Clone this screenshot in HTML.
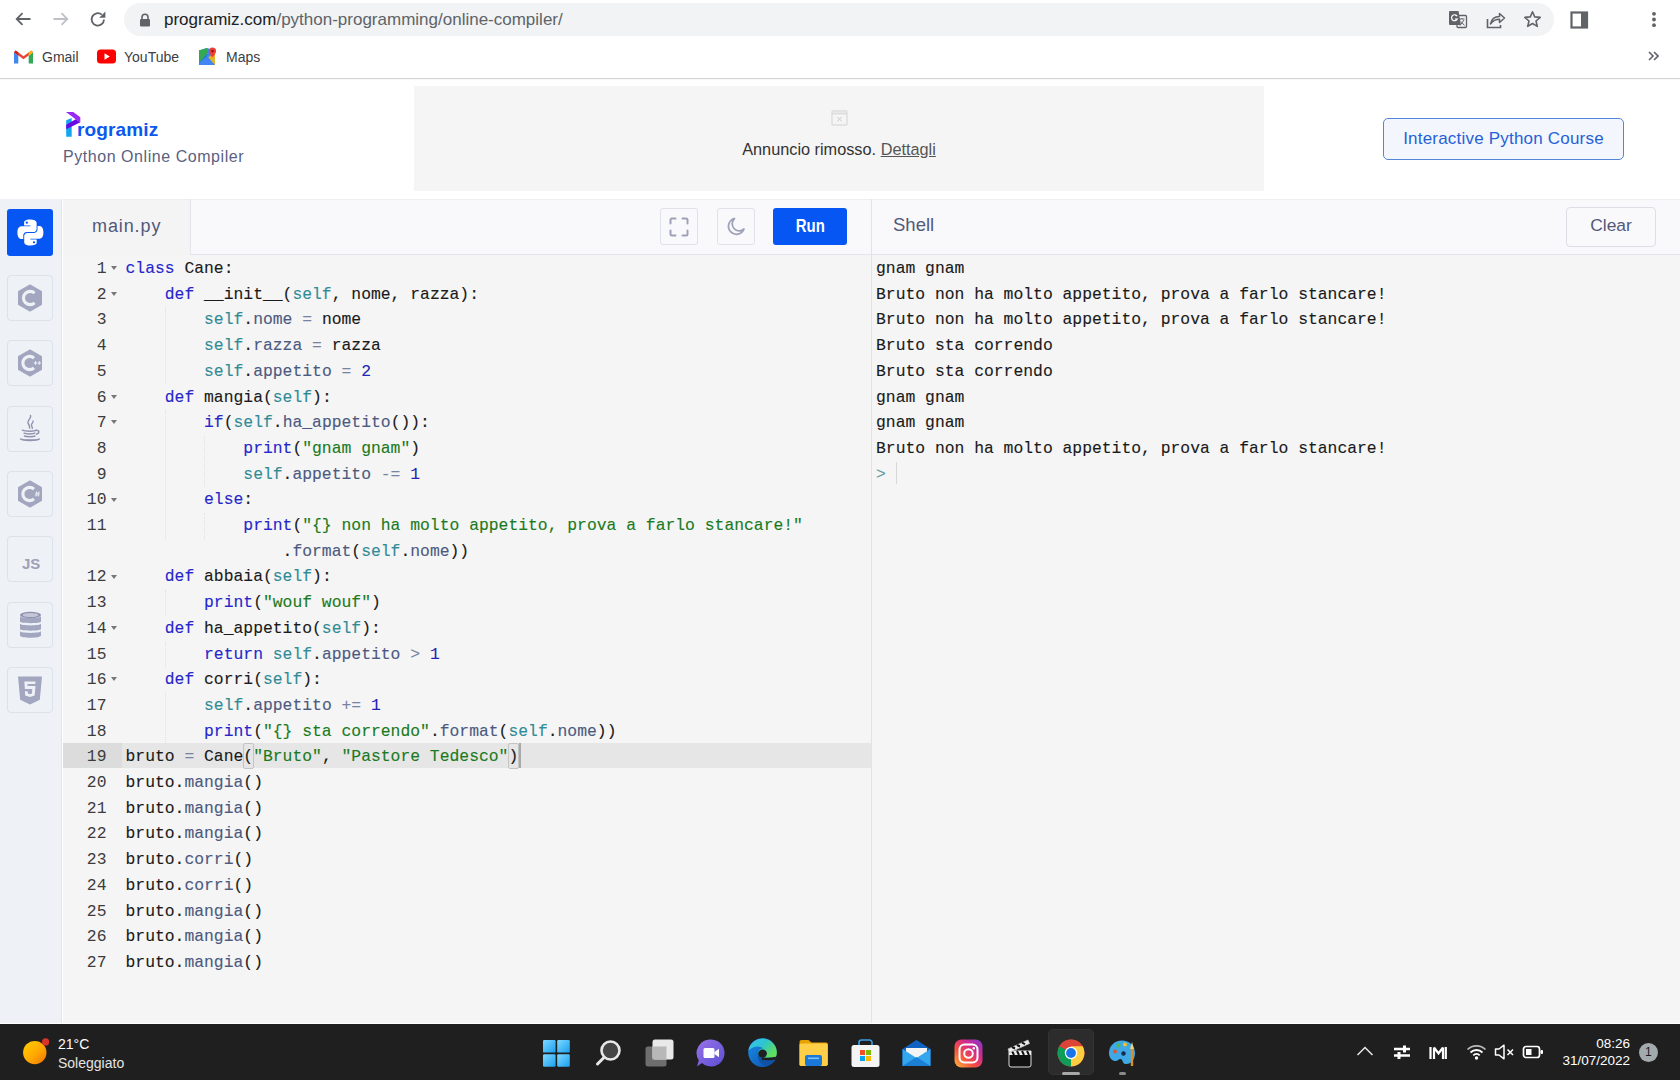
<!DOCTYPE html>
<html><head><meta charset="utf-8">
<style>
*{margin:0;padding:0;box-sizing:border-box}
html,body{width:1680px;height:1080px;overflow:hidden;background:#fff;font-family:"Liberation Sans",sans-serif;position:relative}
.a{position:absolute}
/* chrome */
#omni{left:124px;top:3px;width:1430px;height:33px;border-radius:17px;background:#f1f3f4}
#url{left:164px;top:9px;font-size:17px;line-height:22px;color:#5f6368;white-space:nowrap}
#url b{font-weight:normal;color:#202124}
.bm{top:48px;font-size:14px;line-height:18px;color:#3c4043;white-space:nowrap}
#sep{left:0;top:78px;width:1680px;height:1px;background:#d4d4d4;box-shadow:0 1px 1px rgba(0,0,0,0.04)}
/* header */
#ad{left:414px;top:86px;width:850px;height:105px;background:#f5f5f5}
#adtxt{left:414px;width:850px;top:140px;text-align:center;font-size:16.3px;line-height:19px;color:#333;white-space:nowrap}
#adtxt u{color:#555}
#course{left:1383px;top:118px;width:241px;height:42px;border:1px solid #5485d6;border-radius:5px;background:#f3f6fd;color:#2561d6;font-size:17px;line-height:40px;letter-spacing:0.2px;text-align:center;white-space:nowrap}
#sub{left:63px;top:147px;font-size:16px;line-height:20px;letter-spacing:0.55px;color:#5b5f80;white-space:nowrap}
/* editor */
#side{left:0;top:199px;width:62px;height:824px;background:#eef1f6;border-right:1px solid #e1e4ea}
.lb{left:7px;width:46px;height:46px;border:1px solid #dde1e8;border-radius:4px}
#tabbar{left:63px;top:199px;width:1617px;height:56px;background:#f9f9fb;border-top:1px solid #eceef2;border-bottom:1px solid #e3e5ea}
#tab{left:63px;top:199px;width:128px;height:56px;background:#f4f4f5;border-right:1px solid #e3e5ea;border-top:1px solid #eceef2}
#tabtxt{left:92px;top:215px;font-size:18px;line-height:22px;letter-spacing:0.9px;color:#52587a}
.ib{top:208px;width:38px;height:37px;border:1px solid #dfe2e8;border-radius:3px;background:#f9f9fb}
#run{left:773px;top:208px;width:74px;height:37px;background:#0556f3;border-radius:3px;color:#fff;font-weight:bold;font-size:17.8px;line-height:36px;text-align:center}
#shelltxt{left:893px;top:214px;font-size:18.5px;line-height:22px;color:#52587a}
#clear{left:1566px;top:207px;width:90px;height:40px;border:1px solid #dcdfe6;border-radius:4px;color:#52587a;font-size:17.4px;line-height:34px;text-align:center}
#ed{left:63px;top:255px;width:808px;height:768px;background:#f5f5f5}
#divider{left:871px;top:199px;width:1px;height:824px;background:#e2e3e8}
#sh{left:872px;top:255px;width:808px;height:768px;background:#f5f5f5}
.code{font-family:"Liberation Mono",monospace;font-size:16.37px;line-height:25.7px;white-space:pre;color:#1a1a1a;-webkit-text-stroke:0.12px currentColor}
#gut{left:63px;top:256px;width:43.5px;text-align:right;color:#3c3c3c;-webkit-text-stroke:0}
#src{left:125.5px;top:256px}
#shout{left:876px;top:256px}
.k{color:#2626cc}.s{color:#318b96}.p{color:#4c5a80}.o{color:#7783a3}.n{color:#2424b4}.t{color:#1b7a1d}
.fold{position:absolute;left:111px;width:0;height:0;border-left:3.5px solid transparent;border-right:3.5px solid transparent;border-top:4px solid #777}
#hl{left:63px;top:743px;width:808px;height:25.4px;background:#e6e6e6}
#hlg{left:63px;top:743px;width:59px;height:25.4px;background:#dcdcdc}
.guide{position:absolute;width:1px;border-left:1px dotted #e0e0e0}
/* taskbar */
#tb{left:0;top:1024px;width:1680px;height:56px;background:#1f1f1f}
#wline{left:0;top:1023px;width:1680px;height:1px;background:#fff}
.tt{color:#fff;font-size:13.5px;line-height:16px;white-space:nowrap}
</style></head><body>
<!-- chrome toolbar -->
<div class="a" id="omni"></div>
<svg class="a" style="left:14px;top:10px" width="18" height="18" viewBox="0 0 18 18"><path d="M16.5 9H3M8.5 3.2L2.7 9l5.8 5.8" fill="none" stroke="#5f6368" stroke-width="1.8"/></svg>
<svg class="a" style="left:52px;top:10px" width="18" height="18" viewBox="0 0 18 18"><path d="M1.5 9H15M9.5 3.2L15.3 9l-5.8 5.8" fill="none" stroke="#bdc1c6" stroke-width="1.8"/></svg>
<svg class="a" style="left:89px;top:10px" width="18" height="18" viewBox="0 0 18 18"><path d="M15 9.5A6.2 6.2 0 1 1 12.8 4.6" fill="none" stroke="#5f6368" stroke-width="1.8"/><path d="M16.4 1.6v6.2h-6.2z" fill="#5f6368"/></svg>
<svg class="a" style="left:139px;top:13px" width="12" height="14" viewBox="0 0 12 14"><path d="M3 6V4.2a3 3 0 0 1 6 0V6" fill="none" stroke="#5f6368" stroke-width="1.6"/><rect x="1" y="6" width="10" height="7.5" rx="1.2" fill="#5f6368"/></svg>
<div class="a" id="url"><b>programiz.com</b>/python-programming/online-compiler/</div>
<!-- right icons -->
<svg class="a" style="left:1448px;top:10px" width="20" height="19" viewBox="0 0 20 19"><rect x="9" y="5.5" width="9.5" height="12" rx="1" fill="#f1f3f4" stroke="#5f6368" stroke-width="1.3"/><path d="M2 1h8.5l2.5 14H2a1 1 0 0 1-1-1V2a1 1 0 0 1 1-1z" fill="#5f6368"/><path d="M9.2 6.3A3 3 0 1 0 9.3 9H6.8" fill="none" stroke="#fff" stroke-width="1.2"/><path d="M11.5 9h5M14 8v1M12 15.5l4-5.5M13 11.5l3.5 4" stroke="#5f6368" stroke-width="1" fill="none"/></svg>
<svg class="a" style="left:1486px;top:11px" width="20" height="18" viewBox="0 0 20 18"><path d="M1.5 8v8.5h13V14" fill="none" stroke="#5f6368" stroke-width="1.6"/><path d="M4.5 13c1-5 4.5-7.5 9-7.5V2.5l5 4.5-5 4.5V8.3c-3.8 0-6.6 1.5-9 4.7z" fill="none" stroke="#5f6368" stroke-width="1.5" stroke-linejoin="round"/></svg>
<svg class="a" style="left:1523px;top:10px" width="19" height="18" viewBox="0 0 19 18"><path d="M9.5 1.8l2.2 5.1 5.5.5-4.2 3.6 1.3 5.4-4.8-2.9-4.8 2.9 1.3-5.4-4.2-3.6 5.5-.5z" fill="none" stroke="#5f6368" stroke-width="1.6" stroke-linejoin="round"/></svg>
<svg class="a" style="left:1570px;top:11px" width="19" height="18" viewBox="0 0 19 18"><rect x="1.5" y="1.5" width="15.5" height="15" fill="none" stroke="#5f6368" stroke-width="2.2"/><rect x="11" y="1.5" width="6" height="15" fill="#5f6368"/></svg>
<svg class="a" style="left:1650px;top:11px" width="8" height="18" viewBox="0 0 8 18"><circle cx="4" cy="2.8" r="1.9" fill="#5f6368"/><circle cx="4" cy="8.5" r="1.9" fill="#5f6368"/><circle cx="4" cy="14.2" r="1.9" fill="#5f6368"/></svg>
<!-- bookmarks -->
<svg class="a" style="left:14px;top:50px" width="19" height="14" viewBox="0 0 19 14"><path d="M0 2.2v11.3h4.3V5.8z" fill="#4285f4"/><path d="M14.7 5.8v7.7H19V2.2z" fill="#34a853"/><path d="M0 2.2L9.5 9.3 19 2.2 17.3 0.5 9.5 6.3 1.7 0.5z" fill="#ea4335"/><path d="M14.7 5.8L19 2.2 17.3.5 14.7 2.5z" fill="#fbbc04"/><path d="M0 2.2l4.3 3.6V2.5L1.7.5z" fill="#c5221f"/></svg>
<div class="a bm" style="left:42px">Gmail</div>
<svg class="a" style="left:97px;top:49px" width="19" height="15" viewBox="0 0 19 15"><rect x="0" y="0.5" width="19" height="14" rx="3.5" fill="#f00"/><path d="M7.5 4.3v6.4l5.3-3.2z" fill="#fff"/></svg>
<div class="a bm" style="left:124px">YouTube</div>
<svg class="a" style="left:198px;top:47px" width="19" height="19" viewBox="0 0 19 19"><path d="M1 3.5l8-2.5v17L1 18z" fill="#1a73e8"/><path d="M1 3.5l8-2.5 0 6L1 16z" fill="#34a853"/><path d="M9 1l8 2.5V18L9 18z" fill="#4285f4"/><path d="M1 18l16-13v13z" fill="#fbbc04" opacity=".85"/><path d="M1 16l8-7 8 9H1z" fill="#4285f4"/><path d="M14.5 0.5a3.6 3.6 0 0 0-3.6 3.6c0 2.6 3.6 6.3 3.6 6.3s3.6-3.7 3.6-6.3A3.6 3.6 0 0 0 14.5.5z" fill="#ea4335"/><circle cx="14.5" cy="4.1" r="1.3" fill="#a50e0e"/></svg>
<div class="a bm" style="left:226px">Maps</div>
<svg class="a" style="left:1648px;top:51px" width="11" height="10" viewBox="0 0 11 10"><path d="M1 1l4 4-4 4M6 1l4 4-4 4" fill="none" stroke="#5f6368" stroke-width="1.6"/></svg>
<div class="a" id="sep"></div>

<!-- programiz header -->
<svg class="a" style="left:60px;top:106px" width="24" height="34" viewBox="0 0 24 34"><path d="M6.2 14.3L11.7 12V30.7H6.2z" fill="#12a6f2"/><path d="M6 6H13.3L20.3 11.3V16.3L15.7 13.3z" fill="#9a2af6"/><path d="M15.7 13.3L20.3 16.3L6.2 23.3V18.7z" fill="#6b06e6"/></svg>
<div class="a" style="left:77px;top:118px;font-size:19px;line-height:24px;font-weight:bold;color:#0a58f0;white-space:nowrap;letter-spacing:0.15px">rogramiz</div>
<div class="a" id="sub">Python Online Compiler</div>
<div class="a" id="ad"></div>
<svg class="a" style="left:831px;top:110px" width="17" height="16" viewBox="0 0 17 16"><rect x="1" y="1" width="15" height="14" rx="1" fill="none" stroke="#ddd" stroke-width="1.4"/><path d="M1 3.5h15" stroke="#ddd" stroke-width="2"/><path d="M6.3 7l4.4 4.4M10.7 7l-4.4 4.4" stroke="#ccc" stroke-width="1"/></svg>
<div class="a" id="adtxt">Annuncio rimosso. <u>Dettagli</u></div>
<div class="a" id="course">Interactive Python Course</div>

<!-- editor area -->
<div class="a" id="side"></div>
<div class="a" style="left:7px;top:209px;width:46px;height:47px;background:#0556f3;border-radius:3px"></div>
<svg class="a" style="left:16px;top:218px" width="29" height="29" viewBox="0 0 29 29"><path d="M14.3 1.5c-6.6 0-6.2 2.9-6.2 2.9v3h6.3v.9H5.6S1.4 7.8 1.4 14.5s3.7 6.4 3.7 6.4h2.2v-3.1s-.1-3.7 3.6-3.7h6.2s3.5.1 3.5-3.4V5.1S21.1 1.5 14.3 1.5zm-3.5 2a1.1 1.1 0 1 1 0 2.3 1.1 1.1 0 0 1 0-2.3z" fill="#fff"/><path d="M14.5 27.5c6.6 0 6.2-2.9 6.2-2.9v-3h-6.3v-.9h8.8s4.2.5 4.2-6.2-3.7-6.4-3.7-6.4h-2.2v3.1s.1 3.7-3.6 3.7H11.7s-3.5-.1-3.5 3.4v5.6s-.5 3.6 6.3 3.6zm3.5-2a1.1 1.1 0 1 1 0-2.3 1.1 1.1 0 0 1 0 2.3z" fill="#fff"/></svg>
<div class="a lb" style="top:275px"></div>
<div class="a lb" style="top:340px"></div>
<div class="a lb" style="top:406px"></div>
<div class="a lb" style="top:471px"></div>
<div class="a lb" style="top:536px"></div>
<div class="a lb" style="top:602px"></div>
<div class="a lb" style="top:667px"></div>
<!-- C -->
<svg class="a" style="left:17px;top:283.5px" width="26" height="28" viewBox="0 0 26 28"><path d="M13 1.2L24.3 7.6V20.4L13 26.8 1.7 20.4V7.6z" fill="#a3a6bf" stroke="#a3a6bf" stroke-width="1.4" stroke-linejoin="round"/><path d="M17.6 9.2A6.6 6.6 0 1 0 17.6 18.8" fill="none" stroke="#eef1f6" stroke-width="3.1"/></svg>
<!-- C++ -->
<svg class="a" style="left:17px;top:349px" width="26" height="28" viewBox="0 0 26 28"><path d="M13 1.2L24.3 7.6V20.4L13 26.8 1.7 20.4V7.6z" fill="#a3a6bf" stroke="#a3a6bf" stroke-width="1.4" stroke-linejoin="round"/><path d="M17 9.2A6.6 6.6 0 1 0 17 18.8" fill="none" stroke="#eef1f6" stroke-width="3.1"/><path d="M16.8 14h3.4M18.5 12.3v3.4M20.6 14h3.4M22.3 12.3v3.4" stroke="#eef1f6" stroke-width="1.1"/></svg>
<!-- Java -->
<svg class="a" style="left:19px;top:414px" width="22" height="30" viewBox="0 0 22 30"><path d="M11.5 1.5c1.5 2.5-3.5 4.5-2.5 7.5.6 1.6 2 2.4 1.6 5" fill="none" stroke="#9093ad" stroke-width="1.5" stroke-linecap="round"/><path d="M14 7c.8 1.5-2.2 2.5-1.5 4.5.3 1 1 1.4.8 3" fill="none" stroke="#9093ad" stroke-width="1.3" stroke-linecap="round"/><path d="M3.5 16.2c2.5 1.3 12 1.3 14 0" fill="none" stroke="#9093ad" stroke-width="1.5" stroke-linecap="round"/><path d="M5 19.2c2 1 9 1 11 0M5.5 22c2 .9 8.5.9 10.5 0" fill="none" stroke="#9093ad" stroke-width="1.4" stroke-linecap="round"/><path d="M17.5 16.5c3-.5 3.5 2.5-.5 3.8" fill="none" stroke="#9093ad" stroke-width="1.4"/><path d="M1.5 25c3 2 16 2 19 0-3 1.2-16 1.2-19 0z" fill="#9093ad" stroke="#9093ad" stroke-width="1.3" stroke-linejoin="round"/></svg>
<!-- C# -->
<svg class="a" style="left:17px;top:480px" width="26" height="28" viewBox="0 0 26 28"><path d="M13 1.2L24.3 7.6V20.4L13 26.8 1.7 20.4V7.6z" fill="#a3a6bf" stroke="#a3a6bf" stroke-width="1.4" stroke-linejoin="round"/><path d="M17 9.2A6.6 6.6 0 1 0 17 18.8" fill="none" stroke="#eef1f6" stroke-width="3.1"/><path d="M19.6 11.5l-.7 5M22 11.5l-.7 5M18.4 13.2h4.2M18.1 14.9h4.2" stroke="#eef1f6" stroke-width=".9"/></svg>
<div class="a" style="left:22px;top:555px;font-size:15px;line-height:17px;font-weight:bold;color:#9da0b9">JS</div>
<!-- DB -->
<svg class="a" style="left:19px;top:611px" width="23" height="28" viewBox="0 0 23 28"><ellipse cx="11.5" cy="4" rx="10.5" ry="3.2" fill="#8d90ad"/><ellipse cx="11.5" cy="4" rx="8" ry="2" fill="#c4c6d8"/><path d="M1 5v5.5c0 2.2 21 2.2 21 0V5c0 2.5-21 2.5-21 0z" fill="#a3a6bf"/><path d="M1 12.5v5.5c0 2.2 21 2.2 21 0v-5.5c0 2.5-21 2.5-21 0z" fill="#a3a6bf"/><path d="M1 20v4.5c0 3 21 3 21 0V20c0 2.5-21 2.5-21 0z" fill="#a3a6bf"/></svg>
<!-- HTML5 -->
<svg class="a" style="left:17px;top:676px" width="26" height="29" viewBox="0 0 26 29"><path d="M1 .5h24l-2.2 23.3L13 28.5 3.2 23.8z" fill="#a3a6bf"/><path d="M18.5 5.5H7.3l.6 7.4h7.4l-.4 4.5L13 18.3l-2.1-.8-.2-2.2H7.9l.3 4.1L13 21l4.7-1.6.8-9.4h-7.9l-.2-2H18.3z" fill="#eef1f6"/></svg>

<div class="a" id="tabbar"></div>
<div class="a" id="tab"></div>
<div class="a" id="tabtxt">main.py</div>
<div class="a ib" style="left:660px"></div>
<svg class="a" style="left:668px;top:216px" width="22" height="22" viewBox="0 0 22 22"><path d="M2.5 7.5V4a1.5 1.5 0 0 1 1.5-1.5h3.5M14.5 2.5H18a1.5 1.5 0 0 1 1.5 1.5v3.5M19.5 14.5V18a1.5 1.5 0 0 1-1.5 1.5h-3.5M7.5 19.5H4A1.5 1.5 0 0 1 2.5 18v-3.5" fill="none" stroke="#9ea1b8" stroke-width="2" stroke-linecap="round"/></svg>
<div class="a ib" style="left:717px"></div>
<svg class="a" style="left:725px;top:216px" width="22" height="22" viewBox="0 0 22 22"><path d="M9.5 2.5A8 8 0 1 0 19 13a6.5 6.5 0 0 1-9.5-10.5z" fill="none" stroke="#9ea1b8" stroke-width="1.8" stroke-linejoin="round"/></svg>
<div class="a" id="run"><span style="display:inline-block;transform:scaleX(0.84)">Run</span></div>
<div class="a" id="divider"></div>
<div class="a" id="shelltxt">Shell</div>
<div class="a" id="clear">Clear</div>

<div class="a" id="ed"></div>
<div class="a" id="sh"></div>
<div class="a" id="hlg"></div>
<div class="a" id="hl" style="left:122px;width:749px"></div>

<div class="a" style="left:243.4px;top:742.6px;width:10.8px;height:26.4px;border:1px solid #c4c4c4;border-radius:2px"></div>
<div class="a" style="left:508.3px;top:742.6px;width:10.8px;height:26.4px;border:1px solid #c4c4c4;border-radius:2px"></div>
<div class="a" style="left:518.8px;top:743px;width:2px;height:25.4px;background:#a9a9a9"></div>
<div class="a code" id="gut">1
2
3
4
5
6
7
8
9
10
11

12
13
14
15
16
17
18
19
20
21
22
23
24
25
26
27</div>
<div class="fold" style="top:266.2px"></div><div class="fold" style="top:291.9px"></div><div class="fold" style="top:394.7px"></div><div class="fold" style="top:420.4px"></div><div class="fold" style="top:497.5px"></div><div class="fold" style="top:574.6px"></div><div class="fold" style="top:626.0px"></div><div class="fold" style="top:677.4px"></div>

<div class="guide" style="left:165px;top:307.4px;height:77.1px"></div><div class="guide" style="left:165px;top:410.2px;height:128.5px"></div><div class="guide" style="left:165px;top:590.1px;height:25.7px"></div><div class="guide" style="left:165px;top:641.5px;height:25.7px"></div><div class="guide" style="left:165px;top:692.9px;height:51.4px"></div><div class="guide" style="left:204px;top:435.9px;height:51.4px"></div><div class="guide" style="left:204px;top:513.0px;height:25.7px"></div>
<div class="a code" id="src"><span class="k">class</span> Cane:
    <span class="k">def</span> __init__(<span class="s">self</span>, nome, razza):
        <span class="s">self</span>.<span class="p">nome</span> <span class="o">=</span> nome
        <span class="s">self</span>.<span class="p">razza</span> <span class="o">=</span> razza
        <span class="s">self</span>.<span class="p">appetito</span> <span class="o">=</span> <span class="n">2</span>
    <span class="k">def</span> mangia(<span class="s">self</span>):
        <span class="k">if</span>(<span class="s">self</span>.<span class="p">ha_appetito</span>()):
            <span class="k">print</span>(<span class="t">"gnam gnam"</span>)
            <span class="s">self</span>.<span class="p">appetito</span> <span class="o">-=</span> <span class="n">1</span>
        <span class="k">else</span>:
            <span class="k">print</span>(<span class="t">"{} non ha molto appetito, prova a farlo stancare!"</span>
                .<span class="p">format</span>(<span class="s">self</span>.<span class="p">nome</span>))
    <span class="k">def</span> abbaia(<span class="s">self</span>):
        <span class="k">print</span>(<span class="t">"wouf wouf"</span>)
    <span class="k">def</span> ha_appetito(<span class="s">self</span>):
        <span class="k">return</span> <span class="s">self</span>.<span class="p">appetito</span> <span class="o">&gt;</span> <span class="n">1</span>
    <span class="k">def</span> corri(<span class="s">self</span>):
        <span class="s">self</span>.<span class="p">appetito</span> <span class="o">+=</span> <span class="n">1</span>
        <span class="k">print</span>(<span class="t">"{} sta correndo"</span>.<span class="p">format</span>(<span class="s">self</span>.<span class="p">nome</span>))
bruto <span class="o">=</span> Cane(<span class="t">"Bruto"</span>, <span class="t">"Pastore Tedesco"</span>)
bruto.<span class="p">mangia</span>()
bruto.<span class="p">mangia</span>()
bruto.<span class="p">mangia</span>()
bruto.<span class="p">corri</span>()
bruto.<span class="p">corri</span>()
bruto.<span class="p">mangia</span>()
bruto.<span class="p">mangia</span>()
bruto.<span class="p">mangia</span>()</div>

<div class="a code" id="shout">gnam gnam
Bruto non ha molto appetito, prova a farlo stancare!
Bruto non ha molto appetito, prova a farlo stancare!
Bruto sta correndo
Bruto sta correndo
gnam gnam
gnam gnam
Bruto non ha molto appetito, prova a farlo stancare!
<span style="color:#5f9ea0">&gt;</span></div>
<div class="a" style="left:896px;top:462px;width:1px;height:22px;background:#d8d8d8"></div>

<!-- taskbar -->
<div class="a" id="wline"></div>
<div class="a" id="tb"></div>
<!-- weather -->
<svg class="a" style="left:20px;top:1036px" width="32" height="32" viewBox="0 0 32 32"><defs><linearGradient id="sun" x1="0" y1="0" x2="1" y2="1"><stop offset="0" stop-color="#ffd000"/><stop offset=".55" stop-color="#ffa800"/><stop offset="1" stop-color="#f07000"/></linearGradient></defs><circle cx="14.8" cy="16.6" r="11.7" fill="url(#sun)"/><circle cx="25.6" cy="5.9" r="3.6" fill="#d9332a"/></svg>
<div class="a tt" style="left:58px;top:1036px;font-size:14px">21°C</div>
<div class="a tt" style="left:58px;top:1055px;font-size:14px;color:#e4e4e4">Soleggiato</div>
<!-- start -->
<svg class="a" style="left:543px;top:1040px" width="27" height="27" viewBox="0 0 27 27"><defs><linearGradient id="win" x1="0" y1="0" x2="1" y2="1"><stop offset="0" stop-color="#7fd8ff"/><stop offset="1" stop-color="#1aa0f0"/></linearGradient></defs><rect x="0" y="0" width="12.6" height="12.6" rx="1.2" fill="url(#win)"/><rect x="14.2" y="0" width="12.6" height="12.6" rx="1.2" fill="url(#win)"/><rect x="0" y="14.2" width="12.6" height="12.6" rx="1.2" fill="url(#win)"/><rect x="14.2" y="14.2" width="12.6" height="12.6" rx="1.2" fill="url(#win)"/></svg>
<!-- search -->
<svg class="a" style="left:594px;top:1038px" width="30" height="30" viewBox="0 0 30 30"><circle cx="16.5" cy="12.5" r="9" fill="#454545" stroke="#e8e8e8" stroke-width="2.6"/><path d="M10 19.5L3.5 26" stroke="#e8e8e8" stroke-width="3" stroke-linecap="round"/></svg>
<!-- task view -->
<svg class="a" style="left:645px;top:1039px" width="30" height="29" viewBox="0 0 30 29"><rect x="0.5" y="7.5" width="21" height="20" rx="2.5" fill="#6e6e6e"/><rect x="7.5" y="0.5" width="21" height="20" rx="2.5" fill="#e9e9e9"/><rect x="7.5" y="7.5" width="14" height="13" fill="#b8b8b8"/></svg>
<!-- teams chat -->
<svg class="a" style="left:696px;top:1038px" width="30" height="30" viewBox="0 0 30 30"><defs><linearGradient id="tm" x1="0" y1="0" x2="1" y2="1"><stop offset="0" stop-color="#9a72e6"/><stop offset="1" stop-color="#5b4fd6"/></linearGradient></defs><path d="M15 1.5a13.5 13.5 0 1 1-9 23.5L1 28.5l1.8-6.2A13.5 13.5 0 0 1 15 1.5z" fill="url(#tm)"/><rect x="7.5" y="10" width="11" height="10" rx="1.5" fill="#fff"/><path d="M18.5 14l4.5-3.2v8.4l-4.5-3.2z" fill="#fff"/></svg>
<!-- edge -->
<svg class="a" style="left:747px;top:1038px" width="31" height="31" viewBox="0 0 31 31"><defs><linearGradient id="eg" x1="0" y1="0" x2="1" y2="0.6"><stop offset="0" stop-color="#3cc4f4"/><stop offset=".5" stop-color="#2cc3d0"/><stop offset="1" stop-color="#62e05a"/></linearGradient><linearGradient id="eb" x1="0" y1="0" x2="1" y2="1"><stop offset="0" stop-color="#1a8fe8"/><stop offset="1" stop-color="#0c4ea6"/></linearGradient></defs><circle cx="15.5" cy="14.6" r="14.3" fill="url(#eb)"/><path d="M1.4 12.5A14.3 14.3 0 0 1 29.8 15.5c-.2 1.5-.5 2.5-1 3.5-3 .8-7 1-12.5.5-3-.5-5-2.5-5-4.8 0-2.5 2-4.3 4.5-4.3-3-2.5-9-3-14.4 2.1z" fill="url(#eg)"/><path d="M11.2 15.5c-1 4.5 1 10 7.5 12.5 4-.5 8-3 10-6.5-5 1.5-10 1.2-13.5-.5-2.5-1.3-4-3.5-4-5.5z" fill="#0f52a8"/><ellipse cx="15.6" cy="15.6" rx="4.3" ry="4.1" fill="#1f1f1f"/><path d="M15 19.4c4 .7 9.5.5 14-.6l-.6 2.6c-4.5 1-9.5 1.2-13.8.3z" fill="#1f1f1f"/></svg>
<!-- explorer -->
<svg class="a" style="left:799px;top:1039px" width="30" height="29" viewBox="0 0 30 29"><path d="M0.5 3a2 2 0 0 1 2-2h7l3 2.5h14.5a2 2 0 0 1 2 2V26H.5z" fill="#e8a200"/><rect x="0.5" y="4.5" width="28" height="22.5" rx="1.5" fill="#ffcf48"/><rect x="6" y="16" width="17" height="11" rx="2" fill="#1a78d8"/><rect x="9" y="18.5" width="11" height="1.6" fill="#7cc4ff"/></svg>
<!-- store -->
<svg class="a" style="left:851px;top:1038px" width="29" height="30" viewBox="0 0 29 30"><path d="M8 8V4.5a2.5 2.5 0 0 1 2.5-2.5h8a2.5 2.5 0 0 1 2.5 2.5V8" fill="none" stroke="#3aa0e8" stroke-width="1.6"/><rect x="0.5" y="7" width="28" height="22" rx="2.5" fill="#f4f4f4"/><rect x="9" y="12" width="5" height="5" fill="#f25022"/><rect x="15" y="12" width="5" height="5" fill="#7fba00"/><rect x="9" y="18" width="5" height="5" fill="#00a4ef"/><rect x="15" y="18" width="5" height="5" fill="#ffb900"/></svg>
<!-- mail -->
<svg class="a" style="left:902px;top:1039px" width="30" height="28" viewBox="0 0 30 28"><path d="M0.5 10L14.5 1l14 9v17h-28z" fill="#0f62c2"/><path d="M4 9h21v10H4z" fill="#f4f4f4"/><path d="M.5 10l14 9 14-9v17h-28z" fill="#33a6ee"/><path d="M.5 27l14-9 14 9z" fill="#1b7fd6"/></svg>
<!-- instagram -->
<svg class="a" style="left:954px;top:1039px" width="29" height="29" viewBox="0 0 29 29"><defs><linearGradient id="ig" x1="0" y1="1" x2="1" y2="0"><stop offset="0" stop-color="#fdbb3f"/><stop offset=".35" stop-color="#f5533d"/><stop offset=".65" stop-color="#d52a8a"/><stop offset="1" stop-color="#7c3ad0"/></linearGradient></defs><rect x="0.5" y="0.5" width="28" height="28" rx="7" fill="url(#ig)"/><rect x="5.5" y="5.5" width="18" height="18" rx="5" fill="none" stroke="#fff" stroke-width="2"/><circle cx="14.5" cy="14.5" r="4.3" fill="none" stroke="#fff" stroke-width="2"/><circle cx="19.8" cy="9.2" r="1.2" fill="#fff"/></svg>
<!-- clapper -->
<svg class="a" style="left:1006px;top:1038px" width="27" height="30" viewBox="0 0 27 30"><path d="M3 13h22v14a2 2 0 0 1-2 2H5a2 2 0 0 1-2-2z" fill="#111" stroke="#ddd" stroke-width="1"/><path d="M3 13h22v4H3z" fill="#eee"/><path d="M6 13l2 4M11 13l2 4M16 13l2 4M21 13l2 4" stroke="#111" stroke-width="2"/><path d="M2 11L22 2l1.5 3.5-20 9z" fill="#eee" stroke="#bbb" stroke-width=".8"/><path d="M6 9l3 1.5M11 7l3 1.5M16 4.7l3 1.5" stroke="#111" stroke-width="2"/></svg>
<!-- chrome -->
<div class="a" style="left:1048px;top:1029px;width:46px;height:46px;border-radius:5px;background:#2c2c2c;border:1px solid #333"></div>
<svg class="a" style="left:1057px;top:1039px" width="28" height="28" viewBox="0 0 28 28"><circle cx="14" cy="14" r="13.5" fill="#db4437"/><path d="M14 14L2.3 7.3A13.5 13.5 0 0 0 14 27.5z" fill="#0f9d58"/><path d="M14 14L14 27.5A13.5 13.5 0 0 0 25.7 7.3z" fill="#ffcd40"/><path d="M14 7.3h11.7A13.5 13.5 0 0 0 2.3 7.3z" fill="#db4437"/><path d="M2.3 7.3L8.2 17.4 14 14z" fill="#0f9d58"/><path d="M25.7 7.3L14 7.3l5.8 10.1z" fill="#ffcd40"/><circle cx="14" cy="14" r="6.2" fill="#fff"/><circle cx="14" cy="14" r="4.9" fill="#1a73e8"/></svg>
<div class="a" style="left:1062px;top:1072px;width:18px;height:3px;border-radius:2px;background:#a8a8a8"></div>
<!-- paint -->
<svg class="a" style="left:1108px;top:1039px" width="30" height="29" viewBox="0 0 30 29"><path d="M14 1.5C6.5 1.5 1 7 1 14c0 5.5 3.5 8 6.5 8 2.5 0 3-2 5-2 2.5 0 1.5 4.5 5 5 6.5.5 9.5-5.5 9.5-11C27 7 21.5 1.5 14 1.5z" fill="#3fa9e8"/><circle cx="7" cy="12.5" r="2" fill="#e8532c"/><circle cx="10.5" cy="6.5" r="2" fill="#4cbb4a"/><circle cx="17" cy="5.5" r="2" fill="#f5c02a"/><circle cx="15.5" cy="14.5" r="2.2" fill="#1a2a4a"/><path d="M24 27V10" stroke="#d8902a" stroke-width="2.4"/><path d="M22 10l2-7 2 7z" fill="#f0d080"/></svg>
<div class="a" style="left:1119px;top:1072px;width:7px;height:3px;border-radius:2px;background:#8a8a8a"></div>
<!-- tray -->
<svg class="a" style="left:1356px;top:1045px" width="18" height="12" viewBox="0 0 18 12"><path d="M1.5 10L9 2.5 16.5 10" fill="none" stroke="#e8e8e8" stroke-width="1.5"/></svg>
<svg class="a" style="left:1392px;top:1044px" width="20" height="16" viewBox="0 0 20 16"><path d="M2 5h16M2 11.5h16" stroke="#fff" stroke-width="2.4"/><rect x="11" y="1.5" width="3" height="7" fill="#fff"/><rect x="5.5" y="8" width="3" height="7" fill="#fff"/></svg>
<svg class="a" style="left:1429px;top:1046px" width="18" height="14" viewBox="0 0 18 14"><path d="M1.5 1v12M5 1.5v11.5M5 1.5l4.5 6 4.5-6M14 1.5v11.5M16.8 1v12" fill="none" stroke="#fff" stroke-width="2.2"/></svg>
<svg class="a" style="left:1466px;top:1043px" width="21" height="17" viewBox="0 0 21 17"><path d="M1.5 6.5a13 13 0 0 1 18 0" fill="none" stroke="#bbb" stroke-width="1.6"/><path d="M4.5 9.5a8.5 8.5 0 0 1 12 0M7.3 12.3a4.5 4.5 0 0 1 6.4 0" fill="none" stroke="#fff" stroke-width="1.8"/><circle cx="10.5" cy="15" r="1.7" fill="#fff"/></svg>
<svg class="a" style="left:1494px;top:1044px" width="21" height="16" viewBox="0 0 21 16"><path d="M1.5 5h3.5L10 1.2v13.6L5 11H1.5z" fill="none" stroke="#fff" stroke-width="1.5" stroke-linejoin="round"/><path d="M13.5 5.5l5.5 5.5M19 5.5l-5.5 5.5" stroke="#fff" stroke-width="1.5"/></svg>
<svg class="a" style="left:1522px;top:1045px" width="22" height="14" viewBox="0 0 22 14"><rect x="1.5" y="1.5" width="16" height="11" rx="2.5" fill="none" stroke="#fff" stroke-width="1.7"/><rect x="4" y="4" width="5.5" height="6" fill="#fff"/><rect x="18.5" y="5" width="2.5" height="4" rx="1" fill="#fff"/></svg>
<div class="a tt" style="left:1560px;top:1036px;width:70px;text-align:right;font-size:13.5px">08:26</div>
<div class="a tt" style="left:1540px;top:1053px;width:90px;text-align:right;font-size:13.5px">31/07/2022</div>
<div class="a" style="left:1638.5px;top:1042.5px;width:19.5px;height:19.5px;border-radius:50%;background:#a2aaae;color:#1a1a1a;font-size:12px;line-height:19.5px;text-align:center">1</div>
</body></html>
